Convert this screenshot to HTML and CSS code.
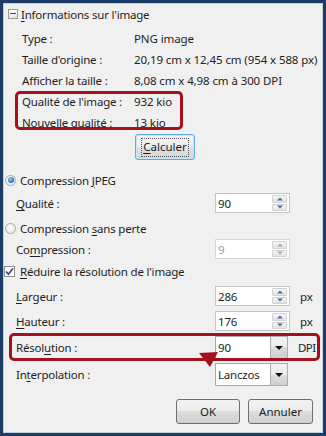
FILE: index.html
```html
<!DOCTYPE html>
<html lang="fr">
<head>
<meta charset="utf-8">
<title>Informations sur l'image</title>
<link rel="stylesheet" href="styles.css">
</head>
<body>
<div class="win">
  <div class="grp-hdr"><span class="minus"></span><span><u>I</u>nformations sur l'image</span></div>
  <div class="info">
    <div class="irow"><span class="lbl">Type :</span><span class="val">PNG image</span></div>
    <div class="irow"><span class="lbl">Taille d'origine :</span><span class="val">20,19 cm x 12,45 cm (954 x 588 px)</span></div>
    <div class="irow"><span class="lbl">Afficher la taille :</span><span class="val">8,08 cm x 4,98 cm à 300 DPI</span></div>
    <div class="irow"><span class="lbl">Qualité de l'image :</span><span class="val">932 kio</span></div>
    <div class="irow"><span class="lbl">Nouvelle qualité :</span><span class="val">13 kio</span></div>
  </div>
  <div class="calc-row"><button class="btn btn-default"><span class="focus"><u>C</u>alculer</span></button></div>

  <div class="frow opt m10"><span class="radio on"></span><span>Compression <u>J</u>PEG</span></div>
  <div class="frow field m3"><span class="flbl"><u>Q</u>ualité :</span>
    <div class="spin"><span class="spin-val">90</span><span class="spin-btns"><span class="sb up"></span><span class="sb down"></span></span></div>
  </div>
  <div class="frow opt m5"><span class="radio"></span><span>Compression <u>s</u>ans perte</span></div>
  <div class="frow field m1"><span class="flbl">Co<u>m</u>pression :</span>
    <div class="spin disabled"><span class="spin-val">9</span><span class="spin-btns"><span class="sb up"></span><span class="sb down"></span></span></div>
  </div>
  <div class="frow opt chk m2"><span class="check"><svg width="9" height="9" viewBox="0 0 9 9"><path d="M1 4.5 L3.5 7.2 L8 1.2" fill="none" stroke="#2a4a8a" stroke-width="1.6"/></svg></span><span><u>R</u>éduire la résolution de l'image</span></div>
  <div class="frow field m5"><span class="flbl"><u>L</u>argeur :</span>
    <div class="spin"><span class="spin-val">286</span><span class="spin-btns"><span class="sb up"></span><span class="sb down"></span></span></div>
    <span class="unit">px</span>
  </div>
  <div class="frow field m5"><span class="flbl"><u>H</u>auteur :</span>
    <div class="spin"><span class="spin-val">176</span><span class="spin-btns"><span class="sb up"></span><span class="sb down"></span></span></div>
    <span class="unit">px</span>
  </div>
  <div class="frow field tall m5"><span class="flbl">Résol<u>u</u>tion :</span>
    <div class="combo"><span class="combo-val">90</span><span class="combo-btn"></span></div>
    <span class="unit dpi">DPI</span>
  </div>
  <div class="frow field tall m4"><span class="flbl">In<u>t</u>erpolation :</span>
    <div class="combo"><span class="combo-val">Lanczos</span><span class="combo-btn"></span></div>
  </div>

  <div class="footer">
    <button class="btn dlg ok">OK</button>
    <button class="btn dlg cancel">Annuler</button>
  </div>

  <div class="redbox box-quality"></div>
  <div class="redbox box-resolution"></div>
  <svg class="pointer" width="20" height="18" viewBox="0 0 20 18"><polygon points="0,3 19,2 11,17" fill="#a3121c"/></svg>
</div>
</body>
</html>
```

FILE: styles.css
```css
* { box-sizing: border-box; }
html, body { margin: 0; padding: 0; }
body {
  width: 326px;
  height: 436px;
  overflow: hidden;
  background: #f0f0f0;
  font-family: "Noto Sans", "Open Sans", sans-serif;
  font-size: 11.5px;
  letter-spacing: -0.2px;
  color: #1e1e1e;
}
u { text-decoration: underline; text-underline-offset: 2px; text-decoration-thickness: 1px; }

.win {
  position: relative;
  width: 326px;
  height: 436px;
  border: 3px solid #1b3c66;
  background: #f0f0f0;
  box-shadow: inset 0 0 0 1px #c4ccd6;
  display: flex;
  flex-direction: column;
}

.grp-hdr {
  display: flex;
  align-items: center;
  gap: 3px;
  height: 16px;
  margin-top: 3px;
  padding-left: 5px;
}
.minus {
  position: relative;
  width: 10px;
  height: 10px;
  border: 1px solid #9a9a9a;
  background: linear-gradient(#ffffff, #e6e6e6);
}
.minus::after {
  content: "";
  position: absolute;
  left: 1px; right: 1px; top: 3px;
  height: 1px;
  background: #4a4a4a;
}

.info { margin-top: 6px; padding-left: 19px; }
.irow { display: flex; align-items: center; height: 21px; }
.lbl { width: 112px; flex: none; }
.val { letter-spacing: -0.1px; white-space: nowrap; }

.calc-row { margin-top: 1px; padding-left: 132px; height: 26px; }

.btn {
  font: inherit;
  color: #1e1e1e;
  border: 1px solid #707070;
  border-radius: 3px;
  background: linear-gradient(#f2f2f2 0, #ebebeb 50%, #dddddd 50%, #cfcfcf 100%);
  padding: 0;
  display: flex;
  align-items: center;
  justify-content: center;
}
.btn-default {
  width: 60px;
  height: 26px;
  border-color: #58aee4;
  box-shadow: inset 0 0 0 1px #c6e6f8;
  background: linear-gradient(#f4f4f4 0, #ededed 50%, #e1e1e1 50%, #d6d6d6 100%);
}
.focus {
  border: 1px dotted #555;
  padding: 1px 1px 2px;
  line-height: 14px;
}

.frow { display: flex; align-items: center; height: 20px; }
.frow.tall { height: 23px; }
.m1 { margin-top: 1px; }
.m2 { margin-top: 2px; }
.m3 { margin-top: 3px; }
.m4 { margin-top: 4px; }
.m5 { margin-top: 5px; }
.m10 { margin-top: 10px; }

.opt { padding-left: 2px; gap: 4px; }
.opt.chk { padding-left: 1px; gap: 5px; }
.field { padding-left: 13px; }
.flbl { width: 199px; flex: none; }
.unit { margin-left: 10px; }
.unit.dpi { margin-left: 10px; letter-spacing: -0.6px; }

.radio {
  width: 11px;
  height: 11px;
  border-radius: 50%;
  border: 1px solid #a8a8a8;
  background: radial-gradient(circle at 50% 40%, #ffffff, #e4e4e4);
  position: relative;
}
.radio.on::after {
  content: "";
  position: absolute;
  left: 1.5px; top: 1.5px;
  width: 6px; height: 6px;
  border-radius: 50%;
  background: radial-gradient(circle at 40% 35%, #8fd0f5, #1d6fb8 70%, #124f8a);
}
.check {
  width: 11px;
  height: 11px;
  border: 1px solid #8e8f8f;
  background: #fff;
  display: flex;
  align-items: center;
  justify-content: center;
}

.spin {
  width: 75px;
  height: 20px;
  border: 1px solid #c4c4c4;
  background: #fff;
  display: flex;
}
.spin-val { flex: 1; display: flex; align-items: center; padding-left: 2px; }
.spin-btns {
  width: 17px;
  display: flex;
  flex-direction: column;
  gap: 1px;
  padding: 1px 2px 1px 0;
}
.sb {
  flex: 1;
  position: relative;
  border: 1px solid #d2d2d2;
  border-radius: 1px;
  background: linear-gradient(#f6f6f6, #e3e3e3);
}
.sb::after {
  content: "";
  position: absolute;
  left: 50%;
  top: 50%;
  transform: translate(-50%, -50%);
  border-left: 3px solid transparent;
  border-right: 3px solid transparent;
}
.sb.up::after { border-bottom: 3px solid #4f6e9e; }
.sb.down::after { border-top: 3px solid #4f6e9e; }
.spin.disabled { border-color: #d6d6d6; color: #a0a0a0; }
.spin.disabled .sb.up::after { border-bottom-color: #a8a8a8; }
.spin.disabled .sb.down::after { border-top-color: #a8a8a8; }

.combo {
  width: 73px;
  height: 23px;
  border: 1px solid #a9a9a9;
  background: #fff;
  display: flex;
}
.combo-val { flex: 1; display: flex; align-items: center; padding-left: 2px; }
.combo-btn {
  width: 18px;
  border: 1px solid #acacac;
  margin: -1px -1px -1px 0;
  border-radius: 0 2px 2px 0;
  background: linear-gradient(#f2f2f2 0, #ebebeb 50%, #dddddd 50%, #cfcfcf 100%);
  display: flex;
  align-items: center;
  justify-content: center;
}
.combo-btn::after {
  content: "";
  border-left: 4px solid transparent;
  border-right: 4px solid transparent;
  border-top: 4px solid #111;
}

.footer {
  margin-top: 13px;
  display: flex;
  justify-content: flex-end;
  gap: 8px;
  padding-right: 10px;
}
.dlg { height: 25px; }
.ok { width: 64px; }
.cancel { width: 65px; }

.redbox {
  position: absolute;
  border: 3px solid #a3121c;
  border-radius: 5px;
}
.box-quality { left: 12px; top: 88px; width: 168px; height: 39px; }
.box-resolution { left: 6px; top: 330px; width: 311px; height: 28px; }
.pointer { position: absolute; left: 196px; top: 347px; }
```
